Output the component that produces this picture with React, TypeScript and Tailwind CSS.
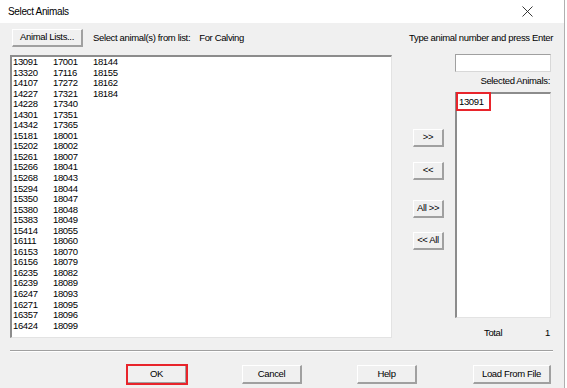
const col1 = ["13091","13320","14107","14227","14228","14301","14342","15181","15202","15261","15266","15268","15294","15350","15380","15383","15414","16111","16153","16156","16235","16239","16247","16271","16357","16424"];
const col2 = ["17001","17116","17272","17321","17340","17351","17365","18001","18002","18007","18041","18043","18044","18047","18048","18049","18055","18060","18070","18079","18082","18089","18093","18095","18096","18099"];
const col3 = ["18144","18155","18162","18184"];

function Btn({ label, className = "" }: { label: string; className?: string }) {
  return (
    <div
      className={`flex items-center justify-center bg-[#f0f0f0] border-t border-l border-t-white border-l-white border-r-2 border-b-2 border-r-[#a0a0a0] border-b-[#a0a0a0] text-black ${className}`}
    >
      {label}
    </div>
  );
}

export default function App() {
  return (
    <div
      className="w-[567px] h-[388px] bg-white flex text-[9.5px] tracking-[-0.35px] text-black"
      style={{ fontFamily: '"Liberation Sans", Arial, sans-serif' }}
    >
      <div className="w-[565px] h-full flex flex-col border-r border-[#b0b0b0]">
        {/* title bar */}
        <div className="h-[23px] bg-white flex items-center justify-between pl-[8px] pr-[31px]">
          <span className="text-[10px]">Select Animals</span>
          <svg width="11" height="11" viewBox="0 0 11 11">
            <path d="M0.5 0.5 L10.5 10.5 M10.5 0.5 L0.5 10.5" stroke="#222" strokeWidth="0.9" fill="none" />
          </svg>
        </div>

        {/* body */}
        <div className="flex-1 bg-[#f0f0f0] flex flex-col pl-[10px] pt-[6px]">
          <div className="h-[18px] flex items-center">
            <Btn label="Animal Lists..." className="ml-[2px] w-[71px] h-[18px]" />
            <span className="ml-[10px]">Select animal(s) from list:</span>
            <span className="ml-[9px]">For Calving</span>
            <span className="ml-auto mr-[11px]">Type animal number and press Enter</span>
          </div>

          <div className="flex items-start mt-[7px] h-[284px]">
            {/* left list */}
            <div className="mt-[1px] w-[382px] h-[283px] bg-white border-t-2 border-l-2 border-t-[#8c8c8c] border-l-[#8c8c8c] border-r border-b border-r-[#e3e3e3] border-b-[#e3e3e3] flex pl-[1px]">
              {[col1, col2, col3].map((col, i) => (
                <div key={i} className="w-[40px] flex flex-col">
                  {col.map((n) => (
                    <div key={n} className="h-[10.56px] leading-[10.56px]">{n}</div>
                  ))}
                </div>
              ))}
            </div>

            {/* middle buttons */}
            <div className="ml-[21px] flex flex-col">
              <Btn label=">>" className="mt-[75px] w-[31px] h-[18px]" />
              <Btn label="<<" className="mt-[15px] w-[31px] h-[18px]" />
              <Btn label="All >>" className="mt-[20px] w-[31px] h-[18px]" />
              <Btn label="<< All" className="mt-[14px] w-[31px] h-[18px]" />
            </div>

            {/* right column */}
            <div className="ml-[11px] w-[96px] flex flex-col">
              <div className="h-[18px] bg-white border-t border-l border-t-[#a0a0a0] border-l-[#a0a0a0] border-r border-b border-r-[#d8d8d8] border-b-[#d8d8d8]" />
              <div className="mt-[2px] h-[14px] flex items-center justify-end pr-[1px]">Selected Animals:</div>
              <div className="relative mt-[4px] h-[226px] bg-white border-t-2 border-l-2 border-t-[#8c8c8c] border-l-[#8c8c8c] border-r border-b border-r-[#e3e3e3] border-b-[#e3e3e3] pl-[2px]">
                <div className="h-[14px] leading-[14px] mt-[1px]">13091</div>
                <div className="absolute left-[-1px] top-[-2px] w-[35px] h-[19px] border-2 border-[#e8242b]" />
              </div>
              <div className="mt-[9px] h-[12px] flex items-center justify-between pl-[29px] pr-[1px]">
                <span>Total</span>
                <span>1</span>
              </div>
            </div>
          </div>

          {/* separator */}
          <div className="mt-[12px] w-[543px] h-[2px] border-t border-t-[#a0a0a0] border-b border-b-white" />

          {/* bottom buttons */}
          <div className="mt-[13px] flex items-center gap-[55px] ml-[117px]">
            <div className="relative w-[60px] h-[19px]">
              <Btn label="OK" className="w-full h-full" />
              <div className="absolute -left-[1px] -top-[1px] w-[62px] h-[21px] border-2 border-[#e8242b]" />
            </div>
            <Btn label="Cancel" className="w-[60px] h-[19px]" />
            <Btn label="Help" className="w-[60px] h-[19px]" />
            <Btn label="Load From File" className="ml-[1px] w-[78px] h-[19px]" />
          </div>
        </div>
      </div>
    </div>
  );
}
